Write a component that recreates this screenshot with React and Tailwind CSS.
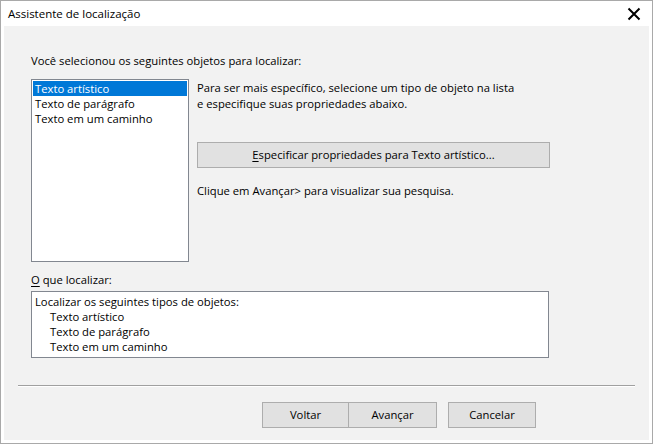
import React from 'react'

const font = { fontFamily: '"Segoe UI", "Open Sans", "Noto Sans", sans-serif' }

function WinButton({ children, className = '' }) {
  return (
    <button
      type="button"
      className={`h-[26px] border border-[#adadad] bg-[#e1e1e1] text-[11.25px] text-black leading-none ${className}`}
    >
      {children}
    </button>
  )
}

export default function App() {
  return (
    <div
      className="w-[653px] h-[444px] bg-white border border-[#a9a9a9] flex flex-col text-[11.25px] text-black"
      style={font}
    >
      {/* Title bar */}
      <div className="h-[25px] flex items-center justify-between pl-[7px] pr-[11px] shrink-0">
        <span className="text-[11.5px] text-black">Assistente de localização</span>
        <svg width="14" height="14" viewBox="0 0 14 14" className="mt-[1px]">
          <path d="M1.5 1.5 L12.5 12.5 M12.5 1.5 L1.5 12.5" stroke="#000" strokeWidth="2" />
        </svg>
      </div>

      {/* Body */}
      <div className="flex-1 mx-[3px] mb-[3px] bg-[#f2f2f2] flex flex-col">
        <div className="pl-[27px] pr-[13px] pt-[27px]">
          <p className="leading-[16px]">Você selecionou os seguintes objetos para localizar:</p>

          <div className="flex mt-[10px]">
            <div className="w-[158px] h-[183px] bg-white border border-[#828790] p-[1px] leading-[15px]">
              <div className="bg-[#0078d7] text-white pl-[2px] h-[15px]">Texto artístico</div>
              <div className="pl-[2px]">Texto de parágrafo</div>
              <div className="pl-[2px]">Texto em um caminho</div>
            </div>

            <div className="ml-[8px] flex flex-col">
              <p className="leading-[16px] mt-[1px]">
                Para ser mais específico, selecione um tipo de objeto na lista
                <br />
                e especifique suas propriedades abaixo.
              </p>
              <WinButton className="w-[353px] mt-[30px]">
                <span className="underline underline-offset-2">E</span>specificar propriedades para Texto artístico...
              </WinButton>
              <p className="leading-[16px] mt-[15px]">Clique em Avançar&gt; para visualizar sua pesquisa.</p>
            </div>
          </div>

          <p className="leading-[16px] mt-[10px]">
            <span className="underline underline-offset-2">O</span> que localizar:
          </p>
          <div className="w-[518px] h-[67px] mt-[3px] bg-white border border-[#828790] pl-[3px] pt-[2px] leading-[15px]">
            <div>Localizar os seguintes tipos de objetos:</div>
            <div className="pl-[15px]">Texto artístico</div>
            <div className="pl-[15px]">Texto de parágrafo</div>
            <div className="pl-[15px]">Texto em um caminho</div>
          </div>
        </div>

        {/* Separator */}
        <div className="mx-[14px] mt-[27px] border-t border-[#a0a0a0] border-b border-b-white" />

        {/* Buttons */}
        <div className="flex mt-[15px] pl-[258px]">
          <WinButton className="w-[87px]">Voltar</WinButton>
          <WinButton className="w-[89px] -ml-[1px]">Avançar</WinButton>
          <WinButton className="w-[88px] ml-[11px]">Cancelar</WinButton>
        </div>
      </div>
    </div>
  )
}
